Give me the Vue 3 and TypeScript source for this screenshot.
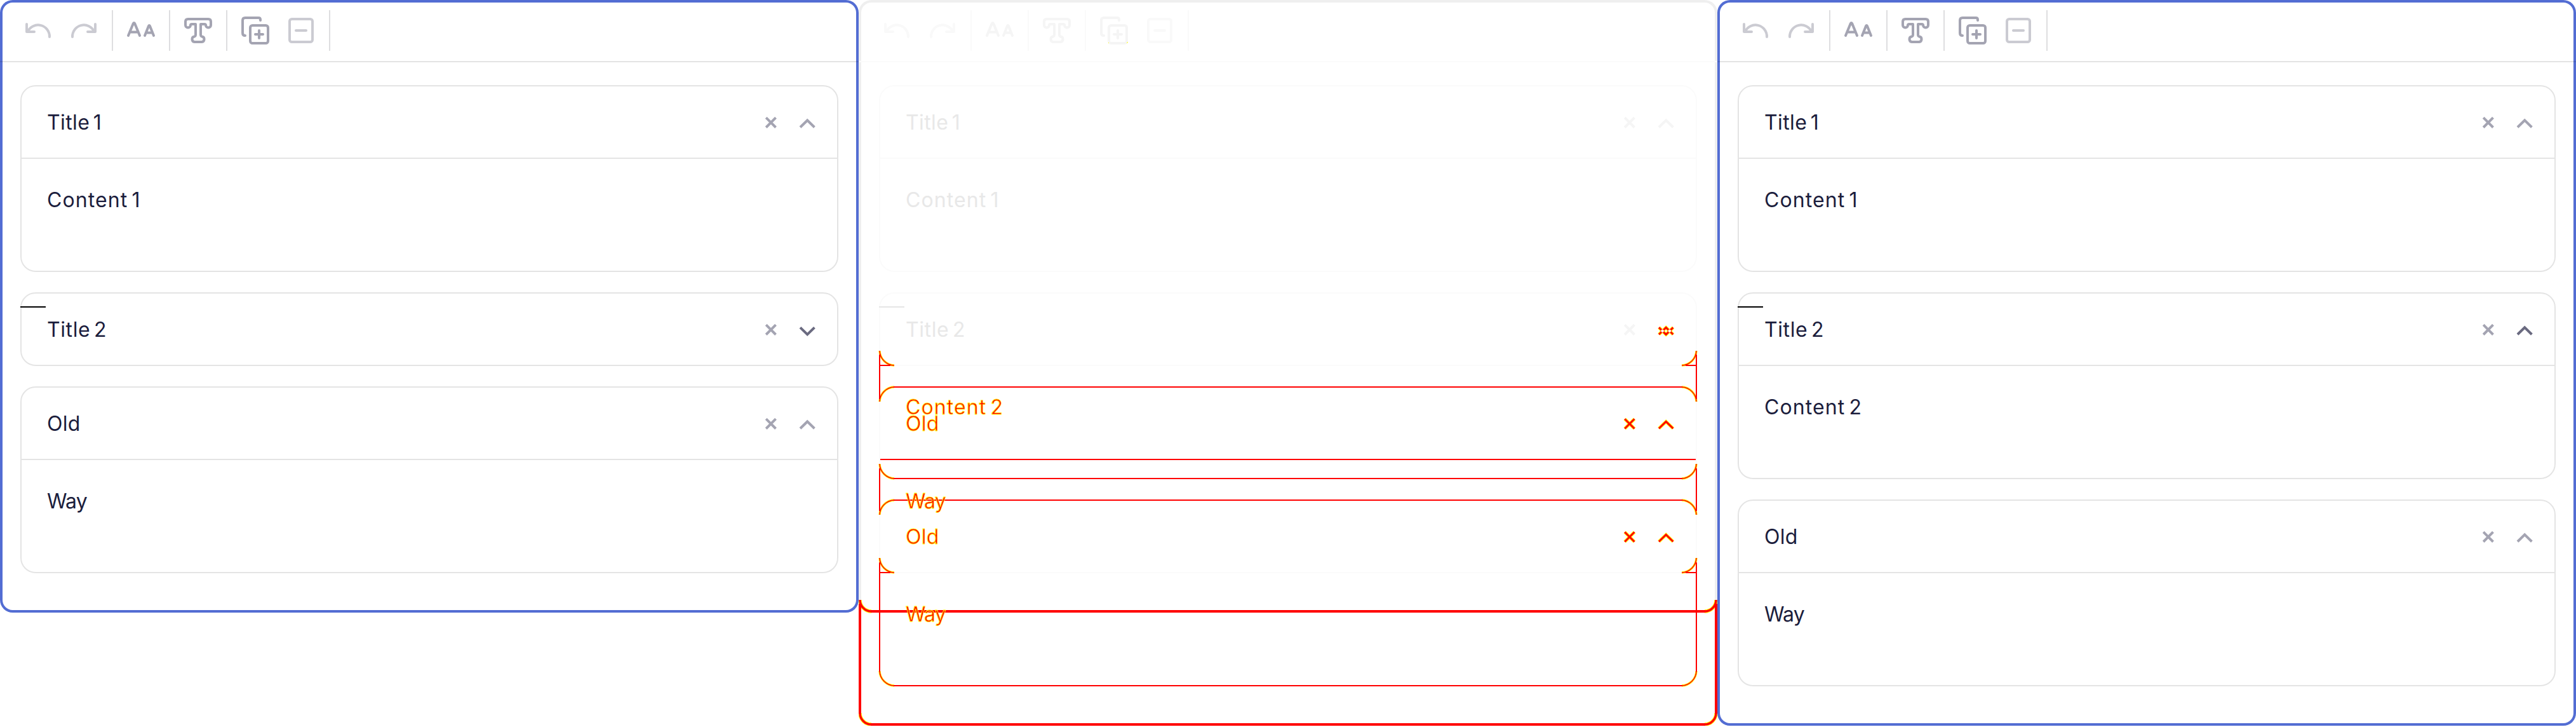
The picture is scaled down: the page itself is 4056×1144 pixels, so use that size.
<script setup lang="ts">
interface Card {
  title: string
  body: string
  open: boolean
  active?: boolean
}

interface Panel {
  kind: 'before' | 'diff' | 'after'
  cards: Card[]
}

const card = (title: string, body: string, open = true, active = false): Card => ({ title, body, open, active })

const panels: Panel[] = [
  { kind: 'before', cards: [card('Title 1', 'Content 1'), card('Title 2', '', false, true), card('Old', 'Way')] },
  { kind: 'diff', cards: [card('Title 1', 'Content 1'), card('Title 2', ''), card('', '')] },
  { kind: 'after', cards: [card('Title 1', 'Content 1'), card('Title 2', 'Content 2', true, true), card('Old', 'Way')] },
]

const spacing: Record<string, number> = {
  'Title 1': 0.4,
  'Title 2': 0.6,
  'Content 1': 1.1,
  'Content 2': 1.1,
  Old: 0.3,
  Way: -0.8,
}
const track = (label: string) => ({ letterSpacing: `${spacing[label] ?? 0}px` })

const changedText = [
  { label: 'Content 2', y: 652 },
  { label: 'Old', y: 678 },
  { label: 'Way', y: 800 },
  { label: 'Old', y: 856 },
  { label: 'Way', y: 978 },
]

// Rounded corners of outlines that differ between the two states
const thinCurves = [
  'M33 552 A24 24 0 0 0 56 575',
  'M1319 552 A24 24 0 0 1 1296 575',
  'M33 632 A24 24 0 0 1 56 609 M1319 632 A24 24 0 0 0 1296 609',
  'M33 730 A24 24 0 0 0 56 753 M1319 730 A24 24 0 0 1 1296 753',
  'M33 810 A24 24 0 0 1 56 787 M1319 810 A24 24 0 0 0 1296 787',
  'M33 878 A24 24 0 0 0 56 901 M1319 878 A24 24 0 0 1 1296 901',
  'M33 1056 A24 24 0 0 0 56 1079 M1319 1056 A24 24 0 0 1 1296 1079',
].join(' ')

const thinLines = [
  'M33 558 V628 M1319 558 V628',
  'M34 575 H50 M1302 575 H1318',
  'M55 609 H1297',
  'M34 723 H1318',
  'M33 737 V804 M1319 737 V804',
  'M55 753 H1297 M55 787 H1297',
  'M33 885 V1057 M1319 885 V1057',
  'M34 901 H50 M1302 901 H1318',
  'M55 1079 H1297',
].join(' ')

const thickCurves =
  'M2 944 A18 18 0 0 0 20 962 M1350 944 A18 18 0 0 1 1332 962 M2 1122 A18 18 0 0 0 20 1140 M1350 1122 A18 18 0 0 1 1332 1140'
const thickLines = 'M2 950 V1123 M1350 950 V1123 M19 962 H1333 M19 1140 H1333'

const cross = 'M1206.2 185.2 L1221.5 200.5 M1221.5 185.2 L1206.2 200.5'
const chevronUp = 'M1260 200.3 L1271.2 189.4 L1282.4 200.3'
const chevronDown = 'M1260 189.4 L1271.2 200.3 L1282.4 189.4'
</script>

<template>
  <main class="board">
    <section v-for="panel in panels" :key="panel.kind" class="panel" :class="panel.kind">
      <header class="toolbar">
        <div class="group">
          <svg class="tool off" viewBox="24 16 72 64">
            <path d="M42 38 V50 H54 M43.6 50 A18 18 0 0 1 78 58" />
          </svg>
          <svg class="tool off" viewBox="96 16 72 64">
            <path d="M150 38 V50 H138 M148.4 50 A18 18 0 0 0 114 58" />
          </svg>
        </div>
        <div class="group">
          <svg class="tool" viewBox="186 16 72 64">
            <path d="M202 56 L209.8 37 Q211 35 212.2 37 L220 56 M205 50.5 H217 M228 56 L234 41 Q235 39 236 41 L242 56 M230.5 51.5 H239.5" />
          </svg>
        </div>
        <div class="group">
          <svg class="tool" viewBox="276 16 72 64">
            <path
              d="M296 30 H328 Q332 30 332 34 V39.5 A4 4 0 0 1 324 39.5 Q324 38 322 38 H316 V54.5 Q316 57 318 57.5 A4.3 4.3 0 0 1 317.7 66 H306.3 A4.3 4.3 0 0 1 306 57.5 Q308 57 308 54.5 V38 H302 Q300 38 300 39.5 A4 4 0 0 1 292 39.5 V34 Q292 30 296 30 Z"
            />
          </svg>
        </div>
        <div class="group">
          <svg class="tool" viewBox="366 16 72 64">
            <path d="M410 32 V31 Q410 28 407 28 H386 Q382 28 382 32 V52 Q382 56 386 56" />
            <rect x="394" y="40" width="28" height="28" rx="3.5" />
            <path d="M402 54 H414 M408 48 V60" />
          </svg>
          <svg class="tool off" viewBox="438 16 72 64">
            <rect x="456" y="30" width="36" height="36" rx="3.5" />
            <path d="M466 48 H482" />
          </svg>
        </div>
      </header>

      <div class="cards">
        <article v-for="(item, i) in panel.cards" :key="i" class="card">
          <span v-if="i === 1" class="caret"></span>
          <div class="card-head">
            <span class="label" :style="track(item.title)">{{ item.title }}</span>
            <svg v-if="item.title" class="controls" viewBox="1192 136 126 112">
              <path :d="cross" />
              <path v-if="!(panel.kind === 'diff' && i === 1)" :class="{ active: item.active }" :d="item.open ? chevronUp : chevronDown" />
            </svg>
          </div>
          <div v-if="item.open" class="card-body">
            <span class="label" :style="track(item.body)">{{ item.body }}</span>
          </div>
        </article>
      </div>

      <svg v-if="panel.kind === 'diff'" class="changes" viewBox="0 0 1352 1142">
        <path class="halo" stroke-width="3.4" :d="thinCurves" />
        <path class="mark" stroke-width="1.5" :d="thinCurves" />
        <path class="mark" stroke-width="2" shape-rendering="crispEdges" :d="thinLines" />
        <path class="halo" stroke-width="5.4" :d="thickCurves" />
        <path class="mark" stroke-width="3.4" :d="thickCurves" />
        <path class="mark" stroke-width="4" shape-rendering="crispEdges" :d="thickLines" />
        <text v-for="(t, i) in changedText" :key="i" x="74" :y="t.y" :style="track(t.label)">{{ t.label }}</text>
        <g v-for="dy in [474, 652]" :key="dy" :transform="`translate(0 ${dy})`">
          <path class="halo" stroke-width="5" :d="cross + chevronUp" />
          <path class="mark" stroke-width="3" :d="cross + chevronUp" />
        </g>
        <g transform="translate(0 326)">
          <path class="halo" stroke-width="5" :d="chevronUp + chevronDown" />
          <path class="mark" stroke-width="3" :d="chevronUp + chevronDown" />
          <circle cx="1265.6" cy="194.8" r="2.3" fill="#fff" />
          <circle cx="1276.8" cy="194.8" r="2.3" fill="#fff" />
        </g>
        <path fill="#ff0" d="M393 67 h1 v1 h-1 z M422 67 h1 v1 h-1 z M423 66 h1 v1 h-1 z" />
      </svg>
    </section>
  </main>
</template>

<style>
body {
  margin: 0;
  background: #fff;
}
</style>

<style scoped>
.board {
  display: grid;
  grid-template-columns: repeat(3, 1352px);
  align-items: start;
  width: 4056px;
  height: 1144px;
  overflow: hidden;
  background: #fff;
}

.panel {
  --frame: #536dd3;
  --line: rgba(0, 0, 0, 0.105);
  --sep: #dedee0;
  --ink: #1b1d3c;
  --icon: #a4a4b2;
  --icon-off: #cbcbd2;
  --caret: #000;
  position: relative;
  box-sizing: border-box;
  border-radius: 20px;
  background: #fff;
  box-shadow: inset 0 0 0 4px var(--frame);
  padding-bottom: 62px;
  color: var(--ink);
  font: 400 32px/40px Inter, "Liberation Sans", sans-serif;
  word-spacing: -4px;
}

.diff {
  --frame: #efefef;
  --line: #fbfbfb;
  --sep: #fafafa;
  --ink: #e8e8e8;
  --icon: #f5f5f5;
  --icon-off: #f9f9f9;
  --caret: #e6e6e6;
}

.toolbar {
  display: flex;
  align-items: center;
  box-sizing: border-box;
  height: 98px;
  padding-left: 16px;
  border-bottom: 2px solid var(--line);
}

.group {
  display: flex;
  padding: 0 8px;
  border-right: 2px solid var(--sep);
}

.tool {
  display: block;
  width: 72px;
  height: 64px;
  fill: none;
  stroke: var(--icon);
  stroke-width: 4;
  stroke-linecap: round;
  stroke-linejoin: round;
}

.tool.off {
  stroke: var(--icon-off);
}

.cards {
  display: flex;
  flex-direction: column;
  gap: 32px;
  padding: 36px 32px 0;
}

.card {
  position: relative;
  border: 2px solid var(--line);
  border-radius: 24px;
}

.card-head {
  display: flex;
  justify-content: space-between;
  align-items: center;
  height: 112px;
  padding-left: 40px;
}

.card-head .label {
  padding-top: 2px;
}

.card-body {
  box-sizing: border-box;
  height: 178px;
  padding: 45px 40px 0;
  border-top: 2px solid var(--line);
}

.label {
  display: block;
  white-space: pre;
}

.controls {
  width: 126px;
  height: 112px;
  fill: none;
  stroke: var(--icon);
  stroke-width: 4;
}

.controls .active {
  stroke: #6a6a80;
}

.caret {
  position: absolute;
  left: -2px;
  top: 20px;
  width: 40px;
  height: 2px;
  background: var(--caret);
}

.changes {
  position: absolute;
  left: 0;
  top: 0;
  width: 1352px;
  height: 1142px;
}

.changes text {
  fill: #f00;
  stroke: #ff0;
  stroke-width: 0.8px;
}

.halo,
.mark {
  fill: none;
  stroke: #f00;
}

.halo {
  stroke: #ff0;
}
</style>
